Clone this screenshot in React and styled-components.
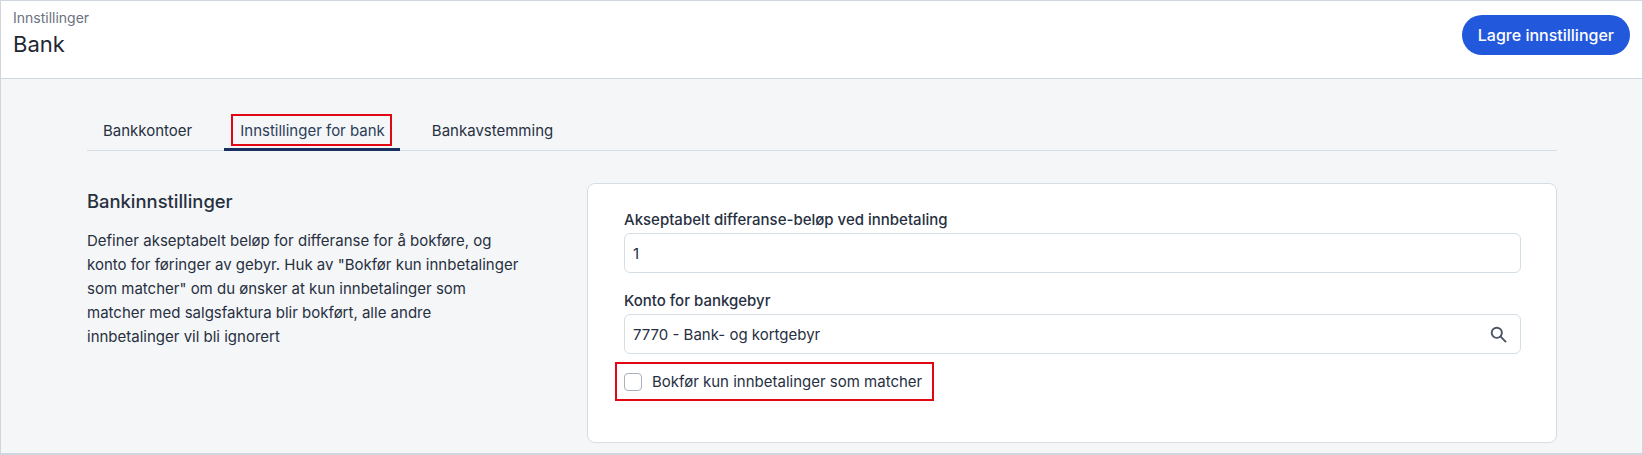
import React from 'react';
import styled, {createGlobalStyle} from 'styled-components';

const GlobalStyle = createGlobalStyle`
  html, body { margin: 0; padding: 0; background: #fff; }
  body { font-family: Inter, "Liberation Sans", sans-serif; color: #27303f; }
  * { box-sizing: border-box; }
`;

const Frame = styled.div`
  width: 1643px;
  height: 455px;
  border: 1px solid #cfd6de;
  border-bottom-width: 2px;
  background: #f5f6f8;
  overflow: hidden;
`;

const Header = styled.header`
  height: 78px;
  background: #fff;
  border-bottom: 1px solid #cfd6de;
  display: flex;
  justify-content: space-between;
  padding: 8px 12px 0 12px;
`;

const Crumb = styled.div`
  font-size: 14px;
  line-height: 17px;
  color: #6b7280;
`;

const Title = styled.h1`
  margin: 4px 0 0;
  font-size: 22px;
  line-height: 28px;
  font-weight: 400;
  color: #1f2733;
`;

const SaveButton = styled.button`
  height: 40px;
  margin-top: 6px;
  padding: 0 16px;
  border: 0;
  border-radius: 20px;
  background: #2258dc;
  color: #fff;
  font: 500 16px Inter, sans-serif;
`;

const Content = styled.main`
  padding: 35px 85px 0 86px;
`;

const Tabs = styled.nav`
  display: flex;
  gap: 16px;
  height: 37px;
  border-bottom: 1px solid #d5dde5;
`;

const Tab = styled.div`
  height: 37px;
  display: flex;
  align-items: flex-start;
  padding: 0 ${p => (p.$active ? '8px 0 7px' : '16px')};
  font-size: 15px;
  color: ${p => (p.$active ? '#2b3d59' : '#27303f')};
  border-bottom: ${p => (p.$active ? '3px solid #17305f' : '0')};
`;

const TabLabel = styled.span`
  display: block;
  height: 32px;
  line-height: 30px;
  padding: ${p => (p.$marked ? '0 5px 0 7px' : '0')};
  border: ${p => (p.$marked ? '2px solid #e30613' : '2px solid transparent')};
  border-left-width: ${p => (p.$marked ? 2 : 0)}px;
  border-right-width: ${p => (p.$marked ? 2 : 0)}px;
`;

const Columns = styled.section`
  display: grid;
  grid-template-columns: 500px 970px;
  margin-top: 32px;
`;

const Intro = styled.div`
  width: 438px;
  padding-top: 6px;
`;

const IntroTitle = styled.h2`
  margin: 0 0 16px;
  font-size: 18.4px;
  line-height: 24px;
  font-weight: 500;
  color: #27303f;
`;

const IntroText = styled.p`
  margin: 0;
  font-size: 15px;
  line-height: 24px;
  color: #27303f;
`;

const Card = styled.div`
  height: 260px;
  background: #fff;
  border: 1px solid #d5dde5;
  border-radius: 8px;
  padding: 26px 35px 0 36px;
`;

const Field = styled.div`
  margin-bottom: 18px;
`;

const Label = styled.label`
  display: block;
  font-size: 15px;
  line-height: 20px;
  font-weight: 500;
  color: #27303f;
  margin-bottom: 3px;
`;

const InputBox = styled.div`
  height: 40px;
  display: flex;
  align-items: center;
  justify-content: space-between;
  padding: 0 13px 0 8px;
  border: 1px solid #d5dde5;
  border-radius: 6px;
  font-size: 15px;
  color: #27303f;
`;

const CheckRow = styled.div`
  width: 319px;
  height: 39px;
  margin: -10px 0 0 -9px;
  padding-left: 7px;
  display: flex;
  align-items: center;
  gap: 10px;
  border: 2px solid #e30613;
  font-size: 15px;
  color: #27303f;
`;

const CheckBox = styled.span`
  width: 18px;
  height: 18px;
  border: 1px solid #a9afb8;
  border-radius: 4px;
  background: #fff;
`;

const SearchIcon = () => (
  <svg width="17" height="17" viewBox="0 0 18 18" fill="none" stroke="#4b5563" strokeWidth="2">
    <circle cx="7.2" cy="7.2" r="5.4" />
    <path d="M11 11l6 6" />
  </svg>
);

export default function App() {
  return (
    <Frame>
      <GlobalStyle />
      <Header>
        <div>
          <Crumb>Innstillinger</Crumb>
          <Title>Bank</Title>
        </div>
        <SaveButton>Lagre innstillinger</SaveButton>
      </Header>
      <Content>
        <Tabs>
          <Tab><TabLabel>Bankkontoer</TabLabel></Tab>
          <Tab $active><TabLabel $marked>Innstillinger for bank</TabLabel></Tab>
          <Tab><TabLabel>Bankavstemming</TabLabel></Tab>
        </Tabs>
        <Columns>
          <Intro>
            <IntroTitle>Bankinnstillinger</IntroTitle>
            <IntroText>
              Definer akseptabelt beløp for differanse for å bokføre, og konto for føringer av gebyr. Huk av "Bokfør kun innbetalinger som matcher" om du ønsker at kun innbetalinger som matcher med salgsfaktura blir bokført, alle andre innbetalinger vil bli ignorert
            </IntroText>
          </Intro>
          <Card>
            <Field>
              <Label>Akseptabelt differanse-beløp ved innbetaling</Label>
              <InputBox>1</InputBox>
            </Field>
            <Field>
              <Label>Konto for bankgebyr</Label>
              <InputBox>7770 - Bank- og kortgebyr<SearchIcon /></InputBox>
            </Field>
            <CheckRow><CheckBox />Bokfør kun innbetalinger som matcher</CheckRow>
          </Card>
        </Columns>
      </Content>
    </Frame>
  );
}
